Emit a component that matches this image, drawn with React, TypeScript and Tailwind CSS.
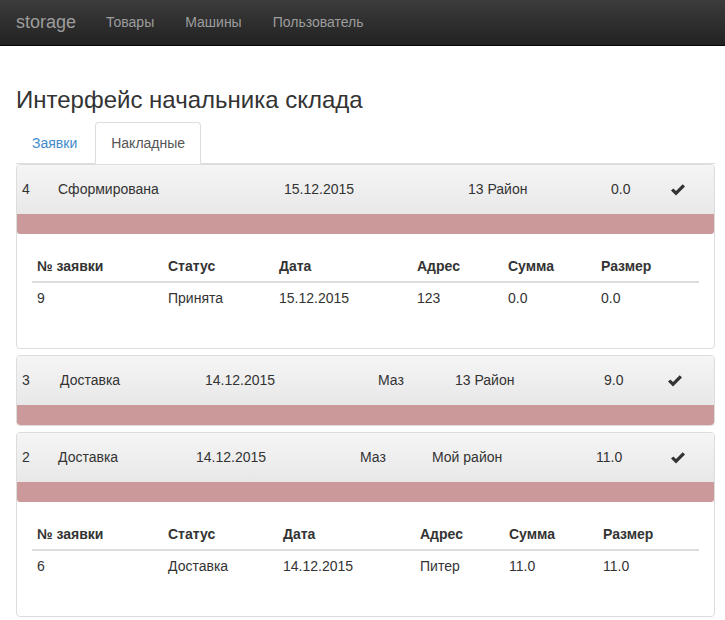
import React from "react";

type Head = { cells: { text: string; w: string }[] };
type Order = { cells: string[] };

const cols1 = ["w-[131px]", "w-[111px]", "w-[138px]", "w-[91px]", "w-[93px]", ""];
const cols3 = ["w-[131px]", "w-[115px]", "w-[137px]", "w-[89px]", "w-[94px]", ""];

const panels: { head: Head; orders?: Order[]; cols?: string[] }[] = [
  {
    head: {
      cells: [
        { text: "4", w: "w-[36px]" },
        { text: "Сформирована", w: "w-[226px]" },
        { text: "15.12.2015", w: "w-[184px]" },
        { text: "13 Район", w: "w-[143px]" },
        { text: "0.0", w: "w-[60px]" },
      ],
    },
    orders: [{ cells: ["9", "Принята", "15.12.2015", "123", "0.0", "0.0"] }],
    cols: cols1,
  },
  {
    head: {
      cells: [
        { text: "3", w: "w-[38px]" },
        { text: "Доставка", w: "w-[145px]" },
        { text: "14.12.2015", w: "w-[173px]" },
        { text: "Маз", w: "w-[77px]" },
        { text: "13 Район", w: "w-[149px]" },
        { text: "9.0", w: "w-[64px]" },
      ],
    },
  },
  {
    head: {
      cells: [
        { text: "2", w: "w-[36px]" },
        { text: "Доставка", w: "w-[138px]" },
        { text: "14.12.2015", w: "w-[164px]" },
        { text: "Маз", w: "w-[72px]" },
        { text: "Мой район", w: "w-[164px]" },
        { text: "11.0", w: "w-[75px]" },
      ],
    },
    orders: [{ cells: ["6", "Доставка", "14.12.2015", "Питер", "11.0", "11.0"] }],
    cols: cols3,
  },
];

const headers = ["№ заявки", "Статус", "Дата", "Адрес", "Сумма", "Размер"];

function Check() {
  return (
    <svg width="14" height="12" viewBox="0 0 14 12" className="text-[#333]">
      <polygon points="0,6.6 2.3,4.4 5,7 11.7,0.2 14,2.4 5,11.6" fill="currentColor" />
    </svg>
  );
}

function Panel({ head, orders, cols }: { head: Head; orders?: Order[]; cols?: string[] }) {
  return (
    <div className="border border-[#dddddd] rounded-[4px] overflow-hidden bg-white">
      <div className="h-[49px] flex items-center pl-[5px] bg-gradient-to-b from-[#f5f5f5] to-[#e8e8e8]">
        {head.cells.map((c, i) => (
          <div key={i} className={`${c.w} shrink-0`}>
            {c.text}
          </div>
        ))}
        <Check />
      </div>
      <div className="h-[20px] bg-[#cb9999] rounded-b-[3px]"></div>
      {orders && cols && (
        <div className="pt-[17px] pb-[15px] px-[15px]">
          <table className="w-full table-fixed mb-[20px] border-collapse">
            <thead>
              <tr>
                {headers.map((h, i) => (
                  <th
                    key={h}
                    className={`${cols[i]} text-left font-bold p-[5px] leading-[20px] border-b-2 border-[#dddddd]`}
                  >
                    {h}
                  </th>
                ))}
              </tr>
            </thead>
            <tbody>
              {orders.map((o, r) => (
                <tr key={r}>
                  {o.cells.map((c, i) => (
                    <td key={i} className="p-[5px] leading-[20px]">
                      {c}
                    </td>
                  ))}
                </tr>
              ))}
            </tbody>
          </table>
        </div>
      )}
    </div>
  );
}

export default function App() {
  return (
    <div className="min-h-[620px] bg-white text-[14px] text-[#333333] font-['Liberation_Sans',Arial,sans-serif]">
      <nav className="h-[46px] flex items-center bg-gradient-to-b from-[#3c3c3c] to-[#222222] border-b border-[#080808] text-[#9d9d9d]">
        <span className="pl-4 pr-[15px] text-[18px]">storage</span>
        <span className="px-[15px]">Товары</span>
        <span className="px-[16px]">Машины</span>
        <span className="px-[15px]">Пользователь</span>
      </nav>
      <div className="pl-4 pr-[10px]">
        <h3 className="mt-[41px] mb-[9px] text-[24px] leading-[26px] font-normal">
          Интерфейс начальника склада
        </h3>
        <ul className="flex border-b border-[#dddddd] h-[42px]">
          <li className="mr-[2px]">
            <a className="block border border-transparent px-[15px] py-[10px] leading-[20px] text-[#428bca]">
              Заявки
            </a>
          </li>
          <li className="-mb-px">
            <a className="block border border-[#dddddd] border-b-white rounded-t-[4px] bg-white px-[15px] py-[10px] leading-[20px] text-[#555555]">
              Накладные
            </a>
          </li>
        </ul>
        <div className="flex flex-col gap-[6px] mt-[0px]">
          {panels.map((p, i) => (
            <Panel key={i} head={p.head} orders={p.orders} cols={p.cols} />
          ))}
        </div>
      </div>
    </div>
  );
}
